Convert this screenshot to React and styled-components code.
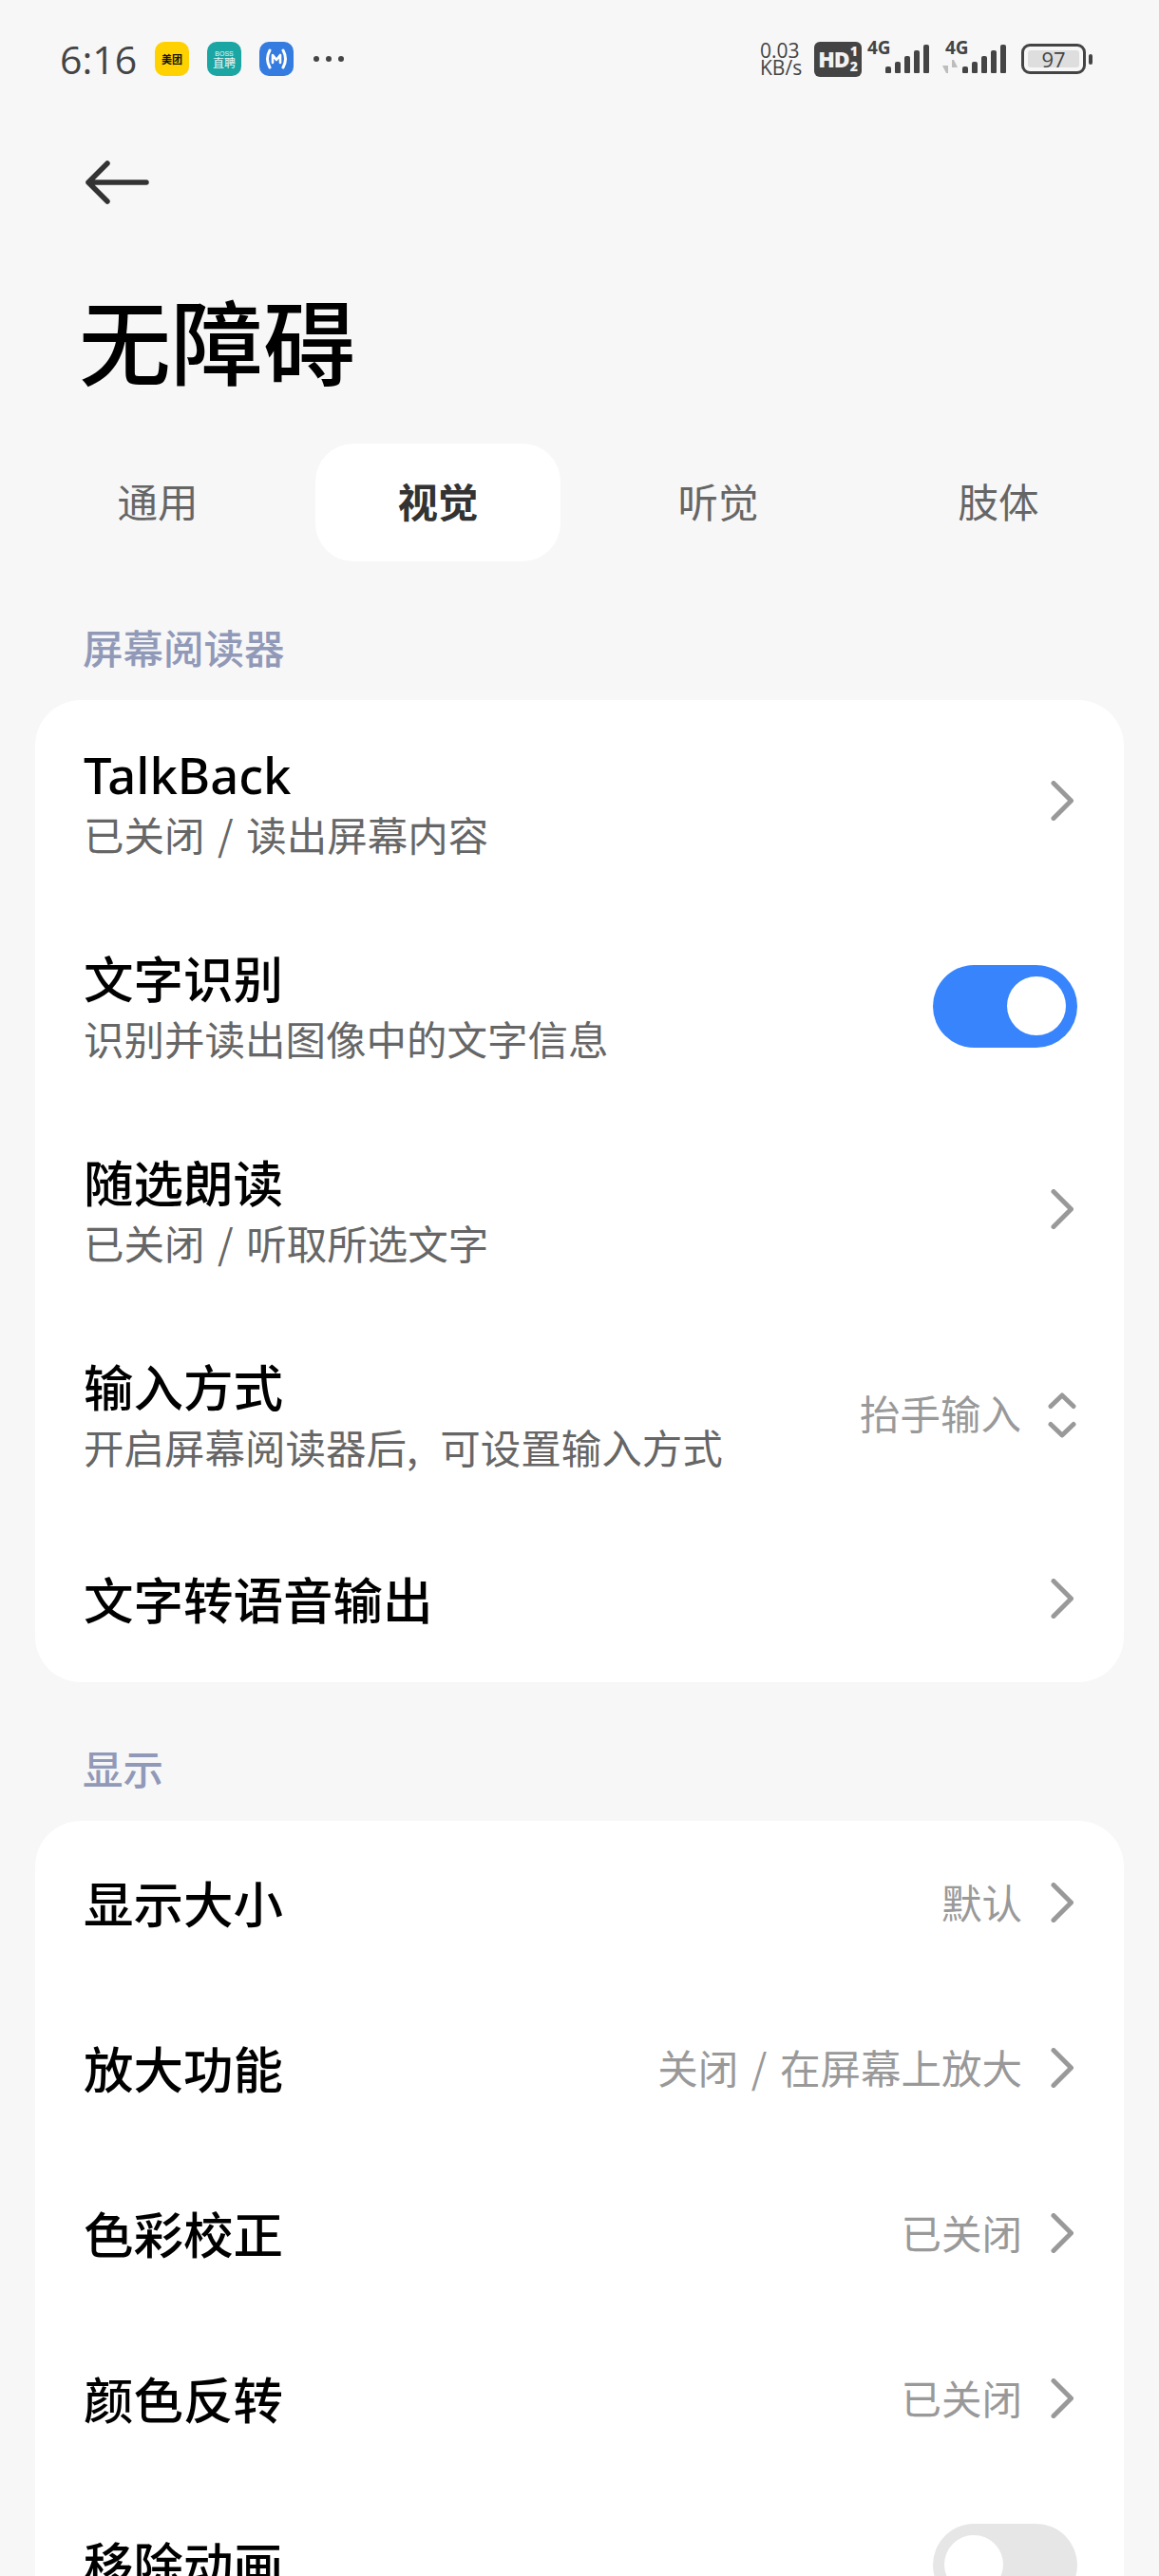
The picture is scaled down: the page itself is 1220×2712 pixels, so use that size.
import React from 'react';
import styled, { createGlobalStyle } from 'styled-components';

const GlobalStyle = createGlobalStyle`
  html, body {
    margin: 0;
    padding: 0;
    background: #f7f7f7;
  }
  body {
    font-family: "Noto Sans", "Noto Sans CJK SC", sans-serif;
  }
`;

const Page = styled.div`
  width: 1220px;
  height: 2712px;
  overflow: hidden;
  background: #f7f7f7;
`;

const StatusBar = styled.div`
  height: 124px;
  padding: 0 70px 0 63px;
  box-sizing: border-box;
  display: flex;
  align-items: center;
  justify-content: space-between;
  color: #444;
`;

const StatusLeft = styled.div`
  display: flex;
  align-items: center;
`;

const Clock = styled.span`
  width: 100px;
  font-family: "Open Sans", "Noto Sans", sans-serif;
  font-size: 41px;
  line-height: 48px;
  color: #444;
`;

const AppIcon = styled.span`
  width: 36px;
  height: 36px;
  margin-right: 19px;
  border-radius: 10px;
  background: ${(p) => p.$bg};
  color: ${(p) => p.$fg};
  display: flex;
  flex-direction: column;
  align-items: center;
  justify-content: center;
  overflow: hidden;
`;

const MeituanText = styled.span`
  font-family: "Noto Sans CJK SC", sans-serif;
  font-size: 11px;
  font-weight: 700;
  line-height: 12px;
  white-space: nowrap;
`;

const BossTop = styled.span`
  font-family: "Liberation Sans", sans-serif;
  font-size: 7px;
  line-height: 7px;
`;

const BossText = styled.span`
  font-family: "Noto Sans CJK SC", sans-serif;
  font-size: 12px;
  line-height: 12px;
  white-space: nowrap;
`;

const MoreDots = styled.span`
  display: flex;
  gap: 7px;
  margin-left: 2px;
`;

const Dot = styled.i`
  width: 6px;
  height: 6px;
  border-radius: 50%;
  background: #444;
`;

const StatusRight = styled.div`
  display: flex;
  align-items: center;
`;

const Speed = styled.div`
  width: 57px;
  font-family: "Open Sans", sans-serif;
  font-size: 21px;
  line-height: 18px;
  color: #444;
`;

const HdBadge = styled.span`
  width: 50px;
  height: 37px;
  margin-right: 6px;
  border-radius: 6px;
  background: #444;
  color: #f2f2f2;
  display: flex;
  align-items: center;
  justify-content: center;
  gap: 1px;
  font-family: "Open Sans", sans-serif;
  font-weight: 800;
`;

const HdText = styled.span`
  font-size: 23px;
  letter-spacing: -1px;
`;

const HdSide = styled.span`
  display: flex;
  flex-direction: column;
  font-size: 14px;
  line-height: 16px;
`;

const Signal = styled.span`
  position: relative;
  width: ${(p) => p.$w}px;
  height: 36px;
  margin: 0 ${(p) => p.$mr}px 6px 0;
  display: flex;
  align-items: flex-end;
  justify-content: flex-end;
  gap: 4px;
`;

const SignalLabel = styled.span`
  position: absolute;
  top: -2px;
  left: ${(p) => p.$left}px;
  font-family: "Open Sans", sans-serif;
  font-weight: 700;
  font-size: 19px;
  line-height: 22px;
  color: #444;
`;

const Bar = styled.i`
  width: 6px;
  height: ${(p) => p.$h}px;
  border-radius: 2px 2px 1px 1px;
  background: #444;
`;

const DataArrows = styled.svg`
  position: absolute;
  left: 0;
  bottom: 0;
`;

const BatteryWrap = styled.span`
  display: flex;
  align-items: center;
  gap: 3px;
`;

const BatteryBody = styled.span`
  width: 68px;
  height: 32px;
  box-sizing: border-box;
  border: 3px solid #444;
  border-radius: 9px;
  padding: 4px;
  display: flex;
`;

const BatteryFill = styled.span`
  flex: 1;
  border-radius: 3px;
  background: #dedede;
  color: #444;
  font-family: "Open Sans", sans-serif;
  font-size: 22px;
  line-height: 18px;
  text-align: center;
`;

const BatteryTip = styled.i`
  width: 4px;
  height: 11px;
  border-radius: 2px;
  background: #444;
`;

const BackBar = styled.div`
  height: 136px;
  padding-left: 89px;
  display: flex;
  align-items: center;
`;

const Title = styled.h1`
  height: 207px;
  box-sizing: border-box;
  margin: 0;
  padding: 0 0 16px 83px;
  display: flex;
  align-items: center;
  font-family: "Noto Sans CJK SC", sans-serif;
  font-size: 97px;
  font-weight: 500;
  color: #000;
`;

const Tabs = styled.div`
  padding: 0 37px;
  display: grid;
  grid-template-columns: repeat(4, 258px);
  gap: 37px;
`;

const Tab = styled.div`
  height: 124px;
  box-sizing: border-box;
  padding-bottom: 5px;
  border-radius: 40px;
  display: flex;
  align-items: center;
  justify-content: center;
  font-family: "Noto Sans CJK SC", sans-serif;
  font-size: 42.5px;
  font-weight: ${(p) => (p.$active ? 700 : 400)};
  color: ${(p) => (p.$active ? '#333' : '#666')};
  background: ${(p) => (p.$active ? '#fff' : 'transparent')};
`;

const SectionLabel = styled.div`
  height: 146px;
  box-sizing: border-box;
  padding: 60px 0 0 87px;
  font-family: "Noto Sans CJK SC", sans-serif;
  font-size: 42.5px;
  font-weight: 500;
  line-height: 60px;
  color: #9199b8;
`;

const Card = styled.div`
  margin: 0 37px;
  border-radius: 48px;
  background: #fff;
`;

const Row = styled.div`
  height: ${(p) => (p.$tall ? 215 : 174)}px;
  padding: 0 49px 0 51px;
  display: flex;
  align-items: center;
  justify-content: space-between;
`;

const RowText = styled.div`
  padding-bottom: 2px;
`;

const RowTitle = styled.div`
  padding-top: 2px;
  margin-bottom: -2px;
  font-family: "Noto Sans", "Noto Sans CJK SC", sans-serif;
  font-size: 52.5px;
  font-weight: 500;
  line-height: 68px;
  color: #000;
`;

const RowSub = styled.div`
  font-family: "Noto Sans CJK SC", sans-serif;
  font-size: 42.5px;
  line-height: 60px;
  word-spacing: ${(p) => p.$wordGap || 4}px;
  color: #666;
`;

const RowRight = styled.div`
  display: flex;
  align-items: center;
`;

const Value = styled.span`
  margin-right: ${(p) => p.$gap}px;
  padding-bottom: 6px;
  font-family: "Noto Sans CJK SC", sans-serif;
  font-size: 42.5px;
  word-spacing: 4px;
  color: #999;
  white-space: nowrap;
`;

const ChevronSvg = styled.svg`
  display: block;
  margin: 0 4px 3px 0;
`;

const UpDownSvg = styled.svg`
  display: block;
  margin-right: 1px;
`;

const Toggle = styled.span`
  width: 152px;
  height: 87px;
  box-sizing: border-box;
  padding: 12px;
  border-radius: 44px;
  background: ${(p) => (p.$on ? '#3784fd' : '#e6e6e6')};
  display: flex;
  justify-content: ${(p) => (p.$on ? 'flex-end' : 'flex-start')};
`;

const Knob = styled.i`
  width: 62px;
  height: 62px;
  border-radius: 50%;
  background: #fff;
`;

const Chevron = () => (
  <ChevronSvg width="24" height="42" viewBox="0 0 24 42">
    <path d="M3 2.5 L21.5 21 L3 39.5" fill="none" stroke="#999" strokeWidth="5" strokeLinecap="round" strokeLinejoin="round" />
  </ChevronSvg>
);

const UpDown = () => (
  <UpDownSvg width="30" height="48" viewBox="0 0 30 48">
    <path d="M3 14.5 L15 3 L27 14.5 M3 33.5 L15 45 L27 33.5" fill="none" stroke="#999" strokeWidth="5" strokeLinecap="round" strokeLinejoin="round" />
  </UpDownSvg>
);

const BARS = [7, 12, 18, 24, 30];

function Bars() {
  return BARS.map((h) => <Bar key={h} $h={h} />);
}

function ScreenRow({ title, sub, subGap, value, tall, control }) {
  return (
    <Row $tall={tall}>
      <RowText>
        <RowTitle>{title}</RowTitle>
        {sub && <RowSub $wordGap={subGap}>{sub}</RowSub>}
      </RowText>
      <RowRight>
        {value && <Value $gap={control === 'select' ? 28 : 30}>{value}</Value>}
        {control === 'chevron' && <Chevron />}
        {control === 'select' && <UpDown />}
        {control === 'on' && <Toggle $on><Knob /></Toggle>}
        {control === 'off' && <Toggle><Knob /></Toggle>}
      </RowRight>
    </Row>
  );
}

export default function App() {
  return (
    <Page>
      <GlobalStyle />
      <StatusBar>
        <StatusLeft>
          <Clock>6:16</Clock>
          <AppIcon $bg="#ffd100" $fg="#111"><MeituanText>美团</MeituanText></AppIcon>
          <AppIcon $bg="#1ba5a3" $fg="#e8f8f7">
            <BossTop>BOSS</BossTop>
            <BossText>直聘</BossText>
          </AppIcon>
          <AppIcon $bg="#347ce0" $fg="#fff">
            <svg width="28" height="22" viewBox="0 0 28 22">
              <path d="M7 2 Q2 11 7 20 M21 2 Q26 11 21 20" fill="none" stroke="#fff" strokeWidth="3" strokeLinecap="round" />
              <path d="M10 15 L10 7 L14 12 L18 7 L18 15" fill="none" stroke="#fff" strokeWidth="2.6" strokeLinecap="round" strokeLinejoin="round" />
            </svg>
          </AppIcon>
          <MoreDots><Dot /><Dot /><Dot /></MoreDots>
        </StatusLeft>
        <StatusRight>
          <Speed>0.03<br />KB/s</Speed>
          <HdBadge>
            <HdText>HD</HdText>
            <HdSide><span>1</span><span>2</span></HdSide>
          </HdBadge>
          <Signal $w={65} $mr={13}>
            <SignalLabel $left={0}>4G</SignalLabel>
            <Bars />
          </Signal>
          <Signal $w={68} $mr={16}>
            <SignalLabel $left={4}>4G</SignalLabel>
            <DataArrows width="18" height="14" viewBox="0 0 18 14">
              <path d="M1 6 H7 V14 H5 Z M11 0 H13 L17 8 H11 Z" fill="#bdbdbd" />
            </DataArrows>
            <Bars />
          </Signal>
          <BatteryWrap>
            <BatteryBody><BatteryFill>97</BatteryFill></BatteryBody>
            <BatteryTip />
          </BatteryWrap>
        </StatusRight>
      </StatusBar>

      <BackBar>
        <svg width="72" height="50" viewBox="0 0 72 50">
          <path d="M24 5 L4 25 L24 45 M4 25 L65 25" fill="none" stroke="#333" strokeWidth="5.5" strokeLinecap="round" strokeLinejoin="round" />
        </svg>
      </BackBar>

      <Title>无障碍</Title>

      <Tabs>
        <Tab>通用</Tab>
        <Tab $active>视觉</Tab>
        <Tab>听觉</Tab>
        <Tab>肢体</Tab>
      </Tabs>

      <SectionLabel>屏幕阅读器</SectionLabel>
      <Card>
        <ScreenRow tall title="TalkBack" sub="已关闭 / 读出屏幕内容" control="chevron" />
        <ScreenRow tall title="文字识别" sub="识别并读出图像中的文字信息" control="on" />
        <ScreenRow tall title="随选朗读" sub="已关闭 / 听取所选文字" control="chevron" />
        <ScreenRow tall title="输入方式" sub="开启屏幕阅读器后, 可设置输入方式" subGap={14} value="抬手输入" control="select" />
        <ScreenRow title="文字转语音输出" control="chevron" />
      </Card>

      <SectionLabel>显示</SectionLabel>
      <Card>
        <ScreenRow title="显示大小" value="默认" control="chevron" />
        <ScreenRow title="放大功能" value="关闭 / 在屏幕上放大" control="chevron" />
        <ScreenRow title="色彩校正" value="已关闭" control="chevron" />
        <ScreenRow title="颜色反转" value="已关闭" control="chevron" />
        <ScreenRow title="移除动画" control="off" />
      </Card>
    </Page>
  );
}
